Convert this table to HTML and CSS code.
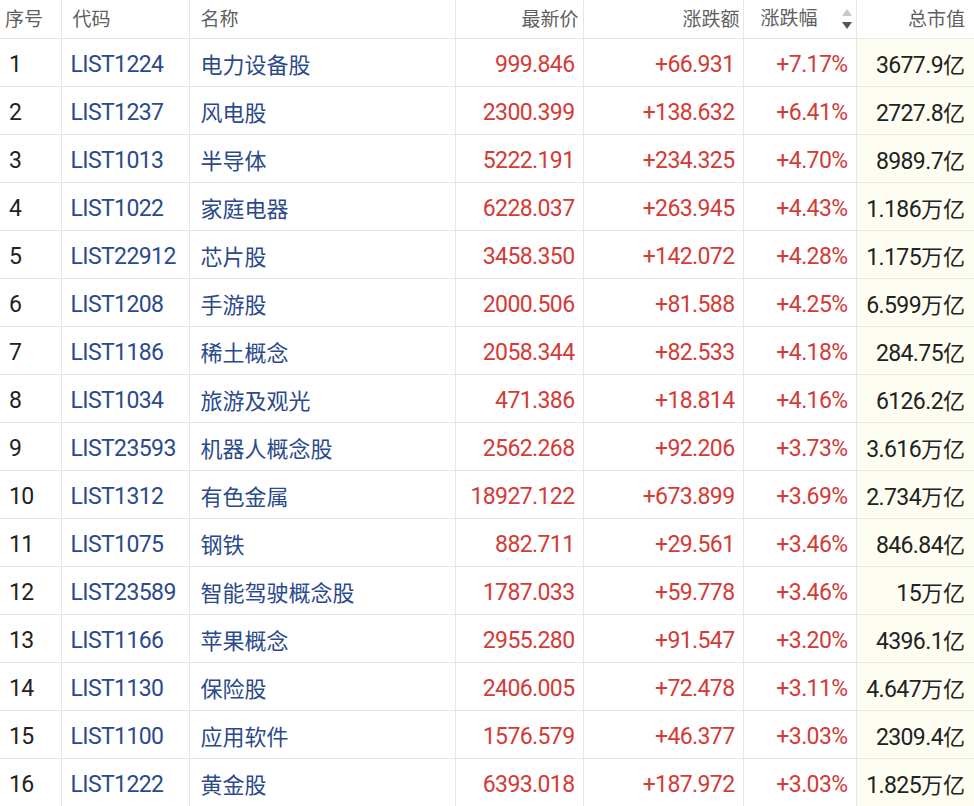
FILE: index.html
```html
<!DOCTYPE html>
<html lang="zh">
<head>
<meta charset="utf-8">
<link rel="stylesheet" href="styles.css">
</head>
<body>
<table class="grid">
<colgroup>
<col class="c-no"><col class="c-code"><col class="c-name"><col class="c-price"><col class="c-chg"><col class="c-pct"><col class="c-cap">
</colgroup>
<thead>
<tr>
<th class="h-no">序号</th>
<th class="h-code">代码</th>
<th class="h-name">名称</th>
<th class="h-price">最新价</th>
<th class="h-chg">涨跌额</th>
<th class="h-pct">涨跌幅<span class="arrows"><span class="up"></span><span class="down"></span></span></th>
<th class="h-cap">总市值</th>
</tr>
</thead>
<tbody>
<tr><td class="no">1</td><td class="code">LIST1224</td><td class="name">电力设备股</td><td class="red">999.846</td><td class="red">+66.931</td><td class="red">+7.17%</td><td class="cap">3677.9<span class="unit">亿</span></td></tr>
<tr><td class="no">2</td><td class="code">LIST1237</td><td class="name">风电股</td><td class="red">2300.399</td><td class="red">+138.632</td><td class="red">+6.41%</td><td class="cap">2727.8<span class="unit">亿</span></td></tr>
<tr><td class="no">3</td><td class="code">LIST1013</td><td class="name">半导体</td><td class="red">5222.191</td><td class="red">+234.325</td><td class="red">+4.70%</td><td class="cap">8989.7<span class="unit">亿</span></td></tr>
<tr><td class="no">4</td><td class="code">LIST1022</td><td class="name">家庭电器</td><td class="red">6228.037</td><td class="red">+263.945</td><td class="red">+4.43%</td><td class="cap">1.186<span class="unit">万亿</span></td></tr>
<tr><td class="no">5</td><td class="code">LIST22912</td><td class="name">芯片股</td><td class="red">3458.350</td><td class="red">+142.072</td><td class="red">+4.28%</td><td class="cap">1.175<span class="unit">万亿</span></td></tr>
<tr><td class="no">6</td><td class="code">LIST1208</td><td class="name">手游股</td><td class="red">2000.506</td><td class="red">+81.588</td><td class="red">+4.25%</td><td class="cap">6.599<span class="unit">万亿</span></td></tr>
<tr><td class="no">7</td><td class="code">LIST1186</td><td class="name">稀土概念</td><td class="red">2058.344</td><td class="red">+82.533</td><td class="red">+4.18%</td><td class="cap">284.75<span class="unit">亿</span></td></tr>
<tr><td class="no">8</td><td class="code">LIST1034</td><td class="name">旅游及观光</td><td class="red">471.386</td><td class="red">+18.814</td><td class="red">+4.16%</td><td class="cap">6126.2<span class="unit">亿</span></td></tr>
<tr><td class="no">9</td><td class="code">LIST23593</td><td class="name">机器人概念股</td><td class="red">2562.268</td><td class="red">+92.206</td><td class="red">+3.73%</td><td class="cap">3.616<span class="unit">万亿</span></td></tr>
<tr><td class="no">10</td><td class="code">LIST1312</td><td class="name">有色金属</td><td class="red">18927.122</td><td class="red">+673.899</td><td class="red">+3.69%</td><td class="cap">2.734<span class="unit">万亿</span></td></tr>
<tr><td class="no">11</td><td class="code">LIST1075</td><td class="name">钢铁</td><td class="red">882.711</td><td class="red">+29.561</td><td class="red">+3.46%</td><td class="cap">846.84<span class="unit">亿</span></td></tr>
<tr><td class="no">12</td><td class="code">LIST23589</td><td class="name">智能驾驶概念股</td><td class="red">1787.033</td><td class="red">+59.778</td><td class="red">+3.46%</td><td class="cap">15<span class="unit">万亿</span></td></tr>
<tr><td class="no">13</td><td class="code">LIST1166</td><td class="name">苹果概念</td><td class="red">2955.280</td><td class="red">+91.547</td><td class="red">+3.20%</td><td class="cap">4396.1<span class="unit">亿</span></td></tr>
<tr><td class="no">14</td><td class="code">LIST1130</td><td class="name">保险股</td><td class="red">2406.005</td><td class="red">+72.478</td><td class="red">+3.11%</td><td class="cap">4.647<span class="unit">万亿</span></td></tr>
<tr><td class="no">15</td><td class="code">LIST1100</td><td class="name">应用软件</td><td class="red">1576.579</td><td class="red">+46.377</td><td class="red">+3.03%</td><td class="cap">2309.4<span class="unit">亿</span></td></tr>
<tr><td class="no">16</td><td class="code">LIST1222</td><td class="name">黄金股</td><td class="red">6393.018</td><td class="red">+187.972</td><td class="red">+3.03%</td><td class="cap">1.825<span class="unit">万亿</span></td></tr>
</tbody>
</table>
</body>
</html>
```
FILE: styles.css
```css
html, body {
  margin: 0;
  padding: 0;
  background: #ffffff;
}
body {
  font-family: Roboto, "Noto Sans CJK SC", sans-serif;
  width: 974px;
  overflow: hidden;
}
.grid {
  border-collapse: collapse;
  table-layout: fixed;
  width: 974px;
}
.c-no { width: 61px; }
.c-code { width: 128px; }
.c-name { width: 266px; }
.c-price { width: 128px; }
.c-chg { width: 160px; }
.c-pct { width: 113px; }
.c-cap { width: 118px; }

.grid th, .grid td {
  border-right: 1px solid #e6e6e6;
  border-bottom: 1px solid #e6e6e6;
  white-space: nowrap;
  overflow: hidden;
  padding: 0;
}
.grid th:last-child, .grid td:last-child {
  border-right: none;
}
.grid th {
  height: 35px;
  padding-bottom: 3px;
  font-family: "Noto Sans CJK SC", sans-serif;
  font-size: 19px;
  line-height: 24px;
  font-weight: 400;
  color: #5f5f5f;
  text-align: right;
  vertical-align: middle;
}
.grid th.h-no { text-align: left; padding-left: 5px; }
.grid th.h-code { text-align: left; padding-left: 11px; }
.grid th.h-name { text-align: left; padding-left: 11px; }
.grid th.h-price { padding-right: 4px; }
.grid th.h-chg { padding-right: 3px; }
.grid th.h-pct { padding-right: 4px; }
.grid th.h-cap { padding-right: 9px; }

.grid td {
  height: 43px;
  padding-top: 4px;
  font-family: Roboto, "Noto Sans CJK SC", sans-serif;
  font-size: 23px;
  letter-spacing: -0.6px;
  line-height: 28px;
  text-align: right;
  vertical-align: middle;
  padding-right: 8px;
}
.grid td.no { text-align: left; color: #222222; padding-left: 9px; }
.grid td.code { text-align: left; color: #2b4a8c; padding-left: 9px; }
.grid td.name {
  text-align: left;
  color: #2b4a8c;
  padding-left: 11px;
  padding-top: 4px;
  padding-bottom: 3px;
  height: 40px;
  font-family: "Noto Sans CJK SC", sans-serif;
  font-size: 22px;
  letter-spacing: 0;
}
.grid td.red { color: #d33b36; }
.grid td.cap { color: #222222; background: #fdfdf1; padding-right: 9px; }
.unit {
  font-family: "Noto Sans CJK SC", sans-serif;
  font-size: 22px;
  letter-spacing: 0;
}

.arrows {
  display: inline-flex;
  flex-direction: column;
  gap: 6px;
  margin-left: 24px;
  vertical-align: middle;
  position: relative;
  top: -1px;
}
.up {
  width: 0; height: 0;
  border-left: 5px solid transparent;
  border-right: 5px solid transparent;
  border-bottom: 7px solid #c8c8c8;
}
.down {
  width: 0; height: 0;
  border-left: 5px solid transparent;
  border-right: 5px solid transparent;
  border-top: 7px solid #555555;
}
```
